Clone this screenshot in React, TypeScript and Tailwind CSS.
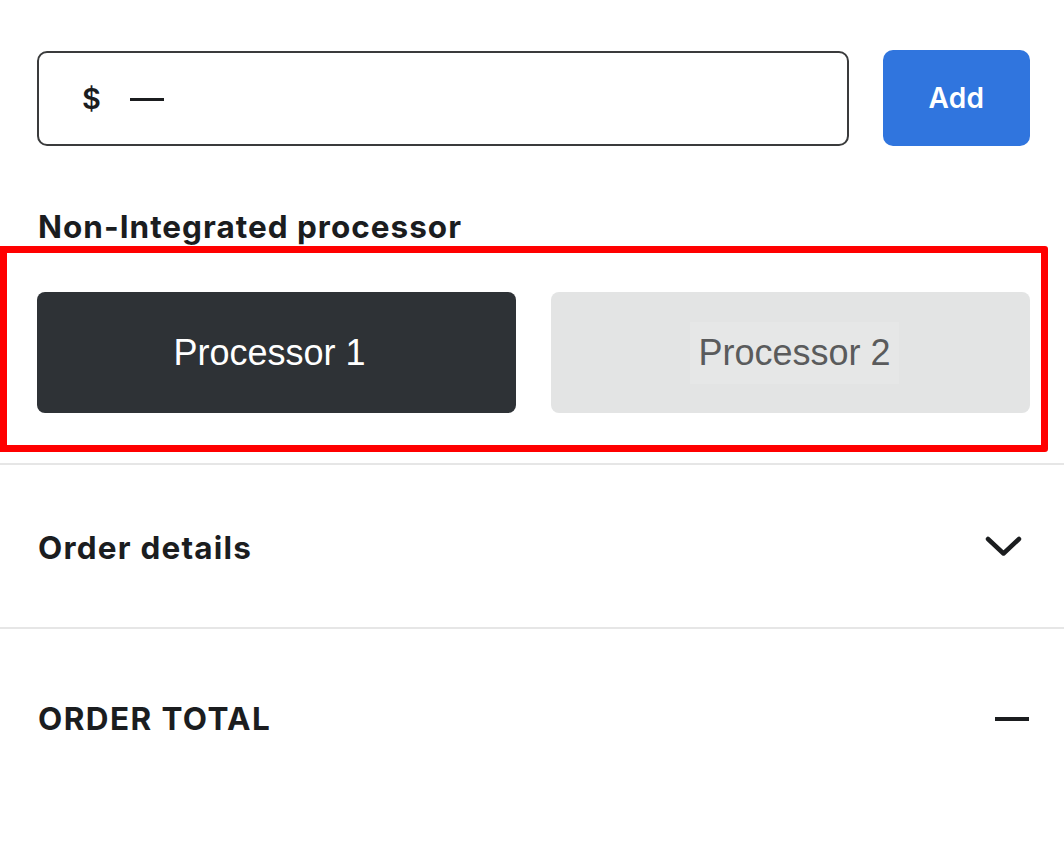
import React from "react";

export default function App() {
  const geo = { fontFamily: "Inter, 'Open Sans', sans-serif" };
  const arial = { fontFamily: "'Liberation Sans', Arial, sans-serif" };
  return (
    <div className="w-[1064px] h-[842px] bg-white overflow-hidden text-[#1b1d1f]" style={geo}>
      {/* Amount row */}
      <div className="flex items-center pl-[37px] pr-[34px] pt-[50px] gap-[34px]">
        <div className="flex-1 h-[95px] rounded-[10px] border-2 border-[#3a3b3c] flex items-center pl-[43px]">
          <span className="text-[29px] font-semibold leading-none">$</span>
          <span className="ml-[29px] inline-block w-[34px] h-[3px] bg-[#1b1d1f] mt-[3px]"></span>
        </div>
        <button className="w-[147px] h-[96px] rounded-[10px] bg-[#3075de] text-white text-[28px] font-semibold tracking-[0.3px]">
          Add
        </button>
      </div>

      {/* Heading */}
      <div className="pl-[38px] mt-[62px] text-[31.5px] font-bold leading-[37px] tracking-[1px]">
        Non-Integrated processor
      </div>

      {/* Highlighted processor choices */}
      <div className="mr-[16px] mt-[1px] border-[7px] border-[#ff0000] rounded-tr-[3px] rounded-br-[3px] pl-[30px] pr-[11px] pt-[39px] pb-[32px]">
        <div className="flex gap-[35px]" style={arial}>
          <button className="flex-1 h-[121px] rounded-[8px] bg-[#2e3236] text-white text-[36px] flex items-center justify-center">
            <span className="mr-[14px]">Processor 1</span>
          </button>
          <button className="flex-1 h-[121px] rounded-[8px] bg-[#e3e4e4] text-[#5a5b5c] text-[36px] flex items-center justify-center">
            <span className="ml-[8px] px-[8px] py-[4px] bg-[#e6e7e7]">Processor 2</span>
          </button>
        </div>
      </div>

      {/* Order details */}
      <div className="mt-[11px] border-t-2 border-[#e6e6e6] h-[164px] flex items-center justify-between pl-[38px] pr-[42px]">
        <span className="text-[31.5px] font-bold tracking-[1.2px] mt-[3px]">Order details</span>
        <svg width="37" height="21" viewBox="0 0 37 21" fill="none">
          <path d="M3 3 L18.5 17.5 L34 3" stroke="#1b1d1f" strokeWidth="4.5" strokeLinecap="round" strokeLinejoin="round" />
        </svg>
      </div>

      {/* Order total */}
      <div className="border-t-2 border-[#e6e6e6] h-[178px] flex items-center justify-between pl-[38px] pr-[35px]">
        <span className="text-[31.5px] font-bold tracking-[1.4px] mt-[4px]">ORDER TOTAL</span>
        <span className="inline-block w-[34px] h-[4px] bg-[#1b1d1f] mt-[4px]"></span>
      </div>
    </div>
  );
}
